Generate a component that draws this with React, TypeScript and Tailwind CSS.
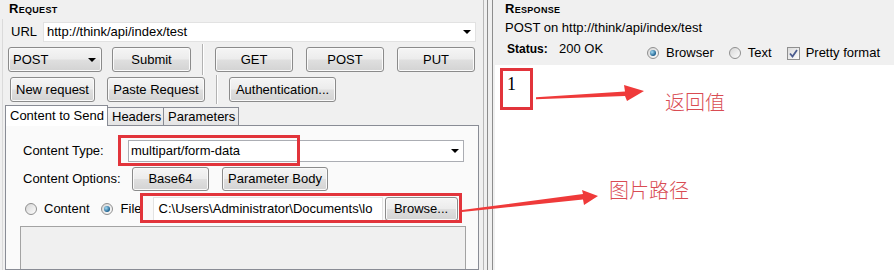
import type { ReactNode } from 'react'

const btn =
  'flex h-full shrink-0 items-center justify-center rounded-[3px] border border-[#8b8b8b] bg-[linear-gradient(#f5f5f5,#ececec_48%,#dfdfdf_52%,#d3d3d3)] shadow-[inset_0_0_0_1px_#fafafa]'

function Arrow() {
  return <span className="border-x-[4px] border-t-[4px] border-x-transparent border-t-black" />
}

function Radio({ checked }: { checked?: boolean }) {
  return (
    <span className="flex h-[12px] w-[12px] shrink-0 items-center justify-center rounded-full border border-[#8f8f8f] bg-[linear-gradient(135deg,#d6d6d6,#fdfdfd)]">
      {checked && (
        <span className="h-[6px] w-[6px] rounded-full bg-[radial-gradient(circle_at_35%_35%,#a6dcf5,#1b5f8e_70%)]" />
      )}
    </span>
  )
}

function Sep() {
  return <div className="h-full w-[2px] shrink-0 border-x border-l-[#b2b2b2] border-r-white" />
}

function Tab({ active, children, className }: { active?: boolean; children: ReactNode; className: string }) {
  return (
    <div
      className={`flex items-center border border-b-0 border-[#898c95] pl-[4px] ${
        active ? 'z-10 -mb-px h-[21px] bg-white' : 'h-[18px] bg-[linear-gradient(#f3f3f3,#e4e4e4)]'
      } ${className}`}
    >
      {children}
    </div>
  )
}

export default function App() {
  return (
    <div className="relative flex h-[270px] w-[894px] overflow-hidden bg-[#f0f0f0] font-['Liberation_Sans',Arial,sans-serif] text-[13px] leading-[16px] text-black">
      {/* Request */}
      <div className="flex w-[484px] shrink-0 flex-col border-r border-[#b8b8b8]">
        <div className="h-[19px] pl-[9px] pt-[1px] text-[13px] font-bold leading-[15px] tracking-[0.3px] [font-variant:small-caps]">
          Request
        </div>
        <div className="ml-[2px] flex flex-1 flex-col border-l border-[#dadada]">
          <div className="mt-[3px] flex h-[20px] items-center">
            <span className="w-[40px] pl-[8px]">URL</span>
            <div className="flex h-full w-[433px] items-center justify-between border border-[#e2e2e2] bg-white pl-[3px] pr-[4px]">
              <span>http://think/api/index/test</span>
              <Arrow />
            </div>
          </div>

          <div className="mt-[5px] flex h-[25px] items-center pl-[5px]">
            <div className={`${btn} w-[94px] !justify-between pl-[4px] pr-[5px]`}>
              <span>POST</span>
              <Arrow />
            </div>
            <div className={`${btn} ml-[10px] w-[79px]`}>Submit</div>
            <div className="ml-[11px] h-[31px]">
              <Sep />
            </div>
            <div className={`${btn} ml-[11px] w-[78px]`}>GET</div>
            <div className={`${btn} ml-[13px] w-[78px]`}>POST</div>
            <div className={`${btn} ml-[13px] w-[78px]`}>PUT</div>
          </div>

          <div className="mt-[5px] flex h-[25px] items-center pl-[7px]">
            <div className={`${btn} w-[85px]`}>New request</div>
            <div className={`${btn} ml-[12px] w-[98px]`}>Paste Request</div>
            <div className="ml-[11px] h-[29px]">
              <Sep />
            </div>
            <div className={`${btn} ml-[11px] w-[107px]`}>Authentication...</div>
          </div>

          <div className="ml-[2px] mt-[3px] flex h-[20px] items-end">
            <Tab active className="w-[103px]">
              Content to Send
            </Tab>
            <Tab className="-ml-px w-[57px]">Headers</Tab>
            <Tab className="-ml-px w-[76px]">Parameters</Tab>
          </div>

          <div className="ml-[2px] flex w-[474px] flex-1 flex-col border border-[#898c95] bg-[#fafafa]">
            <div className="mt-[14px] flex h-[22px] items-center pl-[17px]">
              <span className="w-[105px]">Content Type:</span>
              <div className="flex h-full w-[336px] items-center justify-between border border-[#abadb3] bg-white pl-[2px] pr-[4px]">
                <span>multipart/form-data</span>
                <Arrow />
              </div>
            </div>

            <div className="mt-[5px] flex h-[24px] items-center pl-[17px]">
              <span className="w-[109px]">Content Options:</span>
              <div className={`${btn} w-[77px]`}>Base64</div>
              <div className={`${btn} ml-[13px] w-[106px]`}>Parameter Body</div>
            </div>

            <div className="mt-[6px] flex h-[24px] items-center pl-[19px]">
              <Radio />
              <span className="ml-[7px]">Content</span>
              <span className="ml-[11px]">
                <Radio checked />
              </span>
              <span className="ml-[8px] w-[32px]">File</span>
              <div className="flex h-full w-[230px] items-center overflow-hidden whitespace-nowrap border border-[#e3e3e3] bg-white pl-[5px]">
                C:\Users\Administrator\Documents\lo
              </div>
              <div className={`${btn} ml-[2px] w-[73px]`}>Browse...</div>
            </div>

            <div className="ml-[14px] mt-[5px] w-[446px] flex-1 border border-[#a3a3a3] border-b-0 bg-[#f0f0f0]" />
          </div>
        </div>
      </div>

      {/* splitter */}
      <div className="flex w-[11px] shrink-0">
        <div className="ml-[3px] w-px bg-[#8d8d8d]" />
        <div className="ml-[4px] w-px bg-[#8d8d8d]" />
      </div>

      {/* Response */}
      <div className="flex flex-1 flex-col">
        <div className="h-[65px]">
          <div className="h-[19px] pl-[10px] pt-[1px] text-[13px] font-bold leading-[15px] tracking-[0.3px] [font-variant:small-caps]">
            Response
          </div>
          <div className="h-[18px] pl-[10px] leading-[18px]">POST on http://think/api/index/test</div>
          <div className="flex items-start pl-[12px]">
            <div className="flex pt-[4px]">
              <span className="w-[41px] text-[12px] font-bold">Status:</span>
              <span className="ml-[11px]">200 OK</span>
            </div>
            <div className="ml-[44px] flex items-center pt-[8px]">
              <Radio checked />
              <span className="ml-[7px]">Browser</span>
              <span className="ml-[15px]">
                <Radio />
              </span>
              <span className="ml-[7px]">Text</span>
              <span className="ml-[15px] flex h-[13px] w-[13px] items-center justify-center border border-[#8f8f8f] bg-[linear-gradient(135deg,#dcdcdc,#fdfdfd)]">
                <svg width="11" height="11" viewBox="0 0 11 11">
                  <path d="M2 5.5 L4.5 8.5 L9 2" fill="none" stroke="#4b5c8f" strokeWidth="1.8" />
                </svg>
              </span>
              <span className="ml-[6px]">Pretty format</span>
            </div>
          </div>
        </div>
        <div className="flex-1 bg-white pl-[12px] pt-[10px] font-['Liberation_Serif',serif] text-[18px] leading-[18px]">
          1
        </div>
      </div>

      {/* annotations */}
      <div className="absolute left-[500px] top-[68px] h-[42px] w-[33px] border-[3px] border-[#e2343b]" />
      <div className="absolute left-[118px] top-[135px] h-[31px] w-[182px] border-[3px] border-[#e2343b]" />
      <div className="absolute left-[140px] top-[193px] h-[30px] w-[322px] border-[3px] border-[#e2343b]" />
      <svg className="pointer-events-none absolute left-0 top-0" width="894" height="270">
        <polygon points="536,97.3 625,91.5 624,85 644,91 627,101 625,96 536,99.3" fill="#ef3a3a" />
        <polygon points="462,210 583,194 582,190 598,196 584,205 583,199.5 462,212" fill="#ef3a3a" />
      </svg>
      <div className="absolute left-[665px] top-[92px] font-['Noto_Sans_CJK_SC',sans-serif] text-[20px] font-light leading-[20px] text-[#d94c53]">
        返回值
      </div>
      <div className="absolute left-[609px] top-[180px] font-['Noto_Sans_CJK_SC',sans-serif] text-[20px] font-light leading-[20px] text-[#d94c53]">
        图片路径
      </div>
    </div>
  )
}
